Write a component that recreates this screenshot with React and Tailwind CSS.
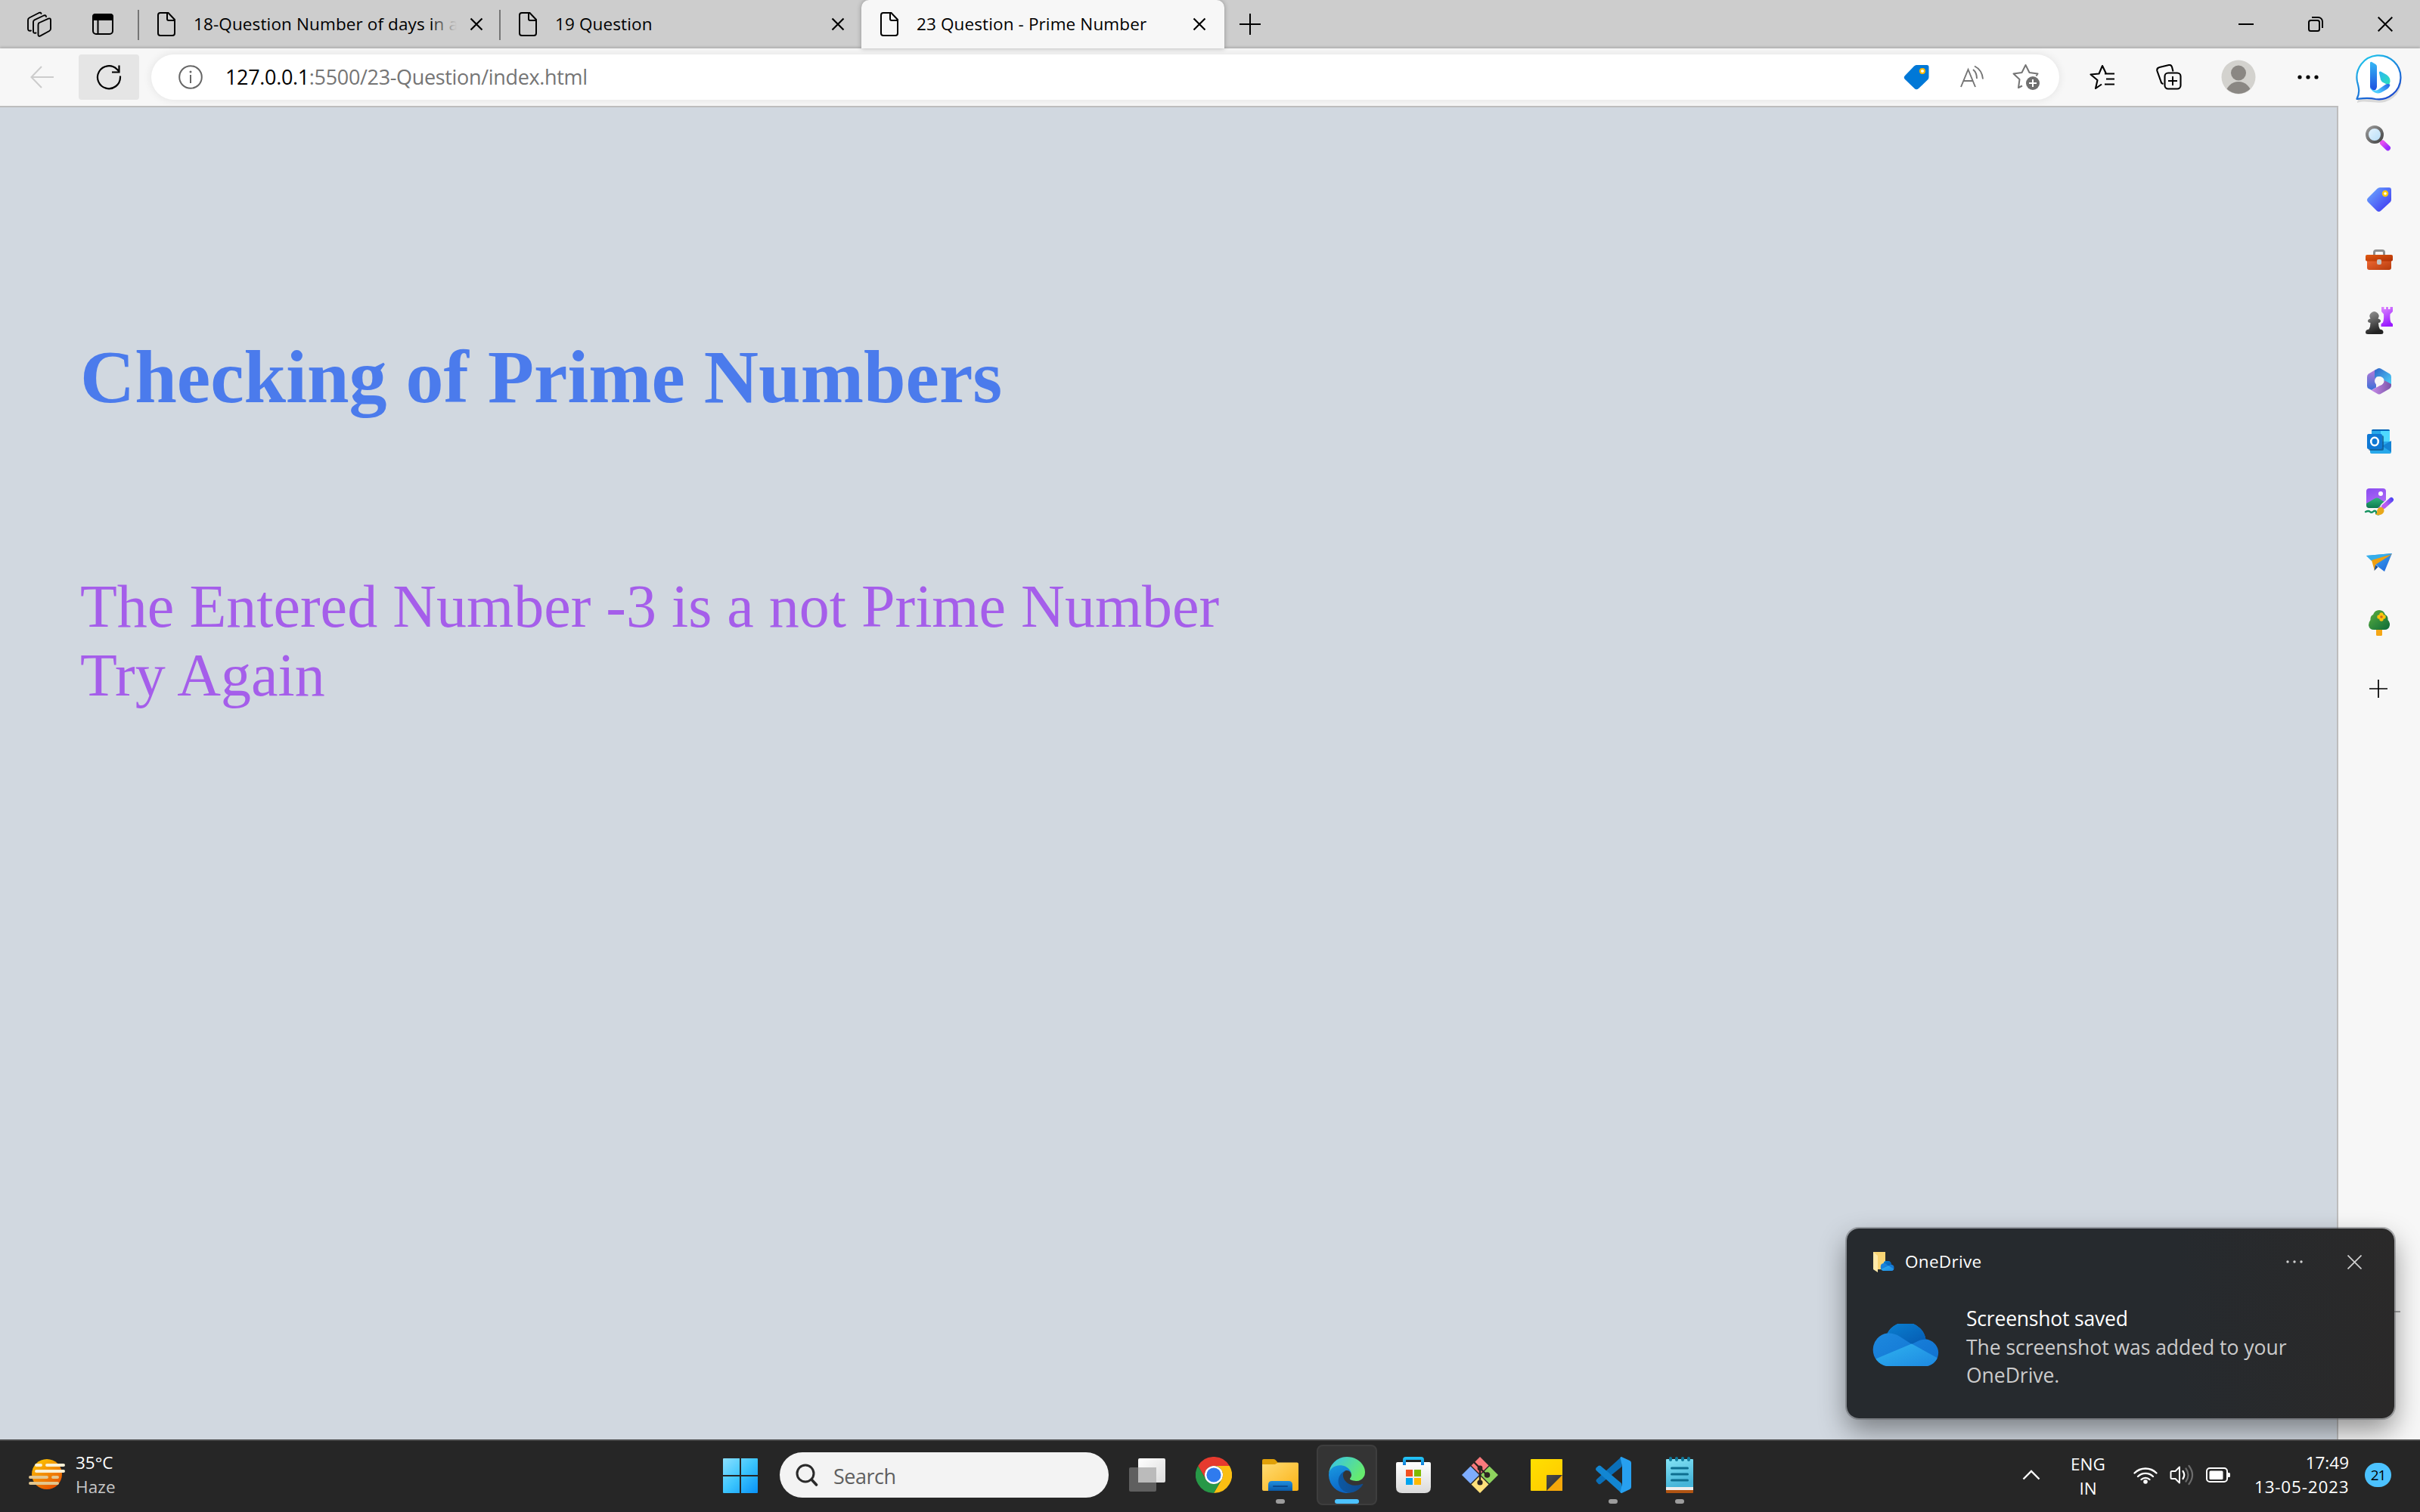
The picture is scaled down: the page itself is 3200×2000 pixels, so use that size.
import React from "react";

function Grad({ id, from, to, x2 = 1, y2 = 1 }) {
  return (
    <linearGradient id={id} x1="0" y1="0" x2={x2} y2={y2}>
      <stop offset="0" stopColor={from} />
      <stop offset="1" stopColor={to} />
    </linearGradient>
  );
}

function Svg({ w, h = w, children, className = "" }) {
  return (
    <svg width={w} height={h} viewBox={`0 0 ${w} ${h}`} fill="none" className={`block shrink-0 ${className}`}>
      {children}
    </svg>
  );
}

const FileIcon = () => (
  <Svg w={24} h={32}>
    <path d="M4 1H14.5L23 10V28a3 3 0 0 1-3 3H4a3 3 0 0 1-3-3V4a3 3 0 0 1 3-3zM13 1.5V9a2 2 0 0 0 2 2h7.5" stroke="#000" strokeWidth="2" />
  </Svg>
);

const CloseTab = () => (
  <Svg w={18}>
    <path d="M1.5 1.5l15 15M16.5 1.5l-15 15" stroke="#000" strokeWidth="2.2" />
  </Svg>
);

function Tab({ title, active, fade, divider }) {
  return (
    <div className={`relative flex h-16 shrink-0 items-center pl-[25px] ${active ? "w-[480px] rounded-t-[10px] bg-[#f7f7f7] shadow-[0_0_6px_rgba(0,0,0,0.3)]" : "w-[478px]"}`}>
      {divider && <div className="absolute -left-px top-[13px] h-10 w-0.5 bg-[#767676]" />}
      <FileIcon />
      <div className="relative ml-6 w-[348px] overflow-hidden whitespace-nowrap text-[22.5px] leading-[30px] tracking-[0.12px] text-black">
        {title}
        {fade && <div className="absolute inset-y-0 right-0 w-8 bg-linear-to-r from-[#cdcdcd]/20 to-[#cdcdcd]" />}
      </div>
      <div className="ml-[17px]">
        <CloseTab />
      </div>
    </div>
  );
}

function TabStrip() {
  return (
    <header className="flex h-16 shrink-0 items-center bg-[#cdcdcd]">
      <Svg w={34} className="ml-[35px]">
        <g stroke="#000" strokeWidth="1.9" strokeLinejoin="round" strokeLinecap="round">
          <path d="M16 15.5L29 9.6q3-1 3 2V23q0 2-1.800 3L18.500 32.300q-3 1.400-3-1.600V18q0-1.800 1-2.500z" />
          <path d="M12.500 28.500q-3.500 1-3.500-2V14q0-1.800 1.600-2.600L23 5.500q2.800-1 3 1.500" />
          <path d="M6 25.500q-4 1-4-2.500V11.500q0-2 1.800-3L16.500 2q2.500-1 3 1" />
        </g>
      </Svg>
      <Svg w={30} className="ml-[52px]">
        <rect x="2" y="2" width="26" height="26" rx="4" stroke="#000" strokeWidth="2" />
        <path d="M1 10V5a4 4 0 0 1 4-4h20a4 4 0 0 1 4 4v5z" fill="#000" />
        <path d="M8.500 9v19" stroke="#000" strokeWidth="2" />
      </Svg>
      <div className="ml-8 flex">
        <Tab title="18-Question Number of days in a" fade divider />
        <Tab title="19 Question" divider />
        <Tab title="23 Question - Prime Number" active />
      </div>
      <Svg w={28} className="ml-5">
        <path d="M14 0v28M0 14h28" stroke="#000" strokeWidth="2" />
      </Svg>
      <div className="ml-auto flex items-center gap-[72px] pr-[36px]">
        <Svg w={20}>
          <path d="M0 10h20" stroke="#000" strokeWidth="2" />
        </Svg>
        <Svg w={20}>
          <rect x="1" y="5" width="14" height="14" rx="2.500" stroke="#000" strokeWidth="2" />
          <path d="M5 1h8.500a5.500 5.500 0 0 1 5.500 5.500V15" stroke="#000" strokeWidth="2" />
        </Svg>
        <Svg w={20}>
          <path d="M.7.7l18.600 18.600M19.300.7L.7 19.300" stroke="#000" strokeWidth="2" />
        </Svg>
      </div>
    </header>
  );
}

const BingIcon = () => (
  <Svg w={66} h={68}>
    <defs>
      <Grad id="bub" from="#1fd0ee" to="#1c4fd0" x2={0.6} />
      <Grad id="b1" from="#35b8f5" to="#2050e0" x2={0} />
      <Grad id="b2" from="#2bb6f2" to="#2de3b8" />
      <Grad id="b3" from="#4fd0ff" to="#1c4fe0" x2={1} y2={-0.4} />
    </defs>
    <path d="M2 60C5 52 6 46 3 38A29 29 0 1 1 27 60.500C18 60 10 58 2 61z" fill="#000" opacity=".12" transform="translate(0 3)" />
    <path d="M1.500 58.800C6 50 4 44 2 36A29 29 0 1 1 26 59C17 57 10 58 1.500 58.800z" fill="#fff" stroke="url(#bub)" strokeWidth="2.200" strokeLinejoin="round" />
    <path d="M19 11.500q0-2.500 2.300-1.500l5 3q1.700 1 1.700 3v27q-1 5-5 4.500-4-1-4-5z" fill="url(#b1)" />
    <path d="M31 24.500q-.5-2.500 2-2l8 4.500q5 3.500 4.500 9l-1.500 5-8-4q-2-1-3-3.500z" fill="url(#b2)" />
    <path d="M19.500 43q2 6 9.500 4l10-7q3-2 6.500 0-1 4-5 6.500l-7 4q-5 2-9-.5-5-3-5-7z" fill="url(#b3)" />
  </Svg>
);

function Toolbar() {
  return (
    <div className="flex h-[76px] shrink-0 items-center bg-[#f7f7f7] shadow-[0_-2px_3px_rgba(0,0,0,0.14)]">
      <Svg w={32} className="ml-10">
        <path d="M31 16H1.500M15 2L1.500 16 15 30" stroke="#ccc" strokeWidth="2" />
      </Svg>
      <div className="ml-8 flex h-[60px] w-20 items-center justify-center rounded bg-[#e5e5e5]">
        <Svg w={34}>
          <path d="M32 15.500v2A15 15 0 1 1 27.500 6.500L31 10M30.500 1.500V10.500H21" stroke="#000" strokeWidth="2.200" />
        </Svg>
      </div>
      <div className="ml-4 flex h-[60px] w-[2523px] items-center rounded-full bg-white pl-9 shadow-[0_0_12px_rgba(0,0,0,0.09)]">
        <Svg w={32}>
          <circle cx="16" cy="16" r="14.800" stroke="#666" strokeWidth="2" />
          <path d="M16 13v11" stroke="#666" strokeWidth="2" />
          <circle cx="16" cy="9" r="1.500" fill="#666" />
        </Svg>
        <div className="ml-[30px] text-[27px] leading-9 tracking-[-0.34px] text-[#757575]">
          <span className="text-black">127.0.0.1</span>:5500/23-Question/index.html
        </div>
        <div className="ml-auto flex items-center pr-[26px]">
          <Svg w={34} className="mr-0.5">
            <path d="M17 1h14q2.500 0 2.500 2.500V17q0 2-1.500 3.500L20 32q-3 2.500-5.500 0L2 20q-2.500-2.500 0-5L14 2.500Q15.500 1 17 1z" fill="#0078d7" />
            <circle cx="25" cy="9" r="3" fill="#fff" stroke="#ffb900" strokeWidth="2" />
          </Svg>
          <Svg w={32} className="ml-[39px]">
            <g stroke="#757575" strokeWidth="1.900">
              <path d="M1 29L10.500 6 20 29M4.500 21h12" />
              <path d="M17 6q5 4 5 12M19 1.500q10 5 11 17" />
            </g>
          </Svg>
          <Svg w={36} className="ml-[37px]">
            <path d="M13 29.500L8 32 9.500 21 1.500 13.500l11-1.500L17.500 2l5 10 11 1.500-2 3" stroke="#757575" strokeWidth="2" strokeLinejoin="round" />
            <circle cx="27" cy="26" r="9" fill="#6f6f6f" />
            <path d="M27 21v10M22 26h10" stroke="#fff" strokeWidth="2" />
          </Svg>
        </div>
      </div>
      <Svg w={34} className="ml-10">
        <path d="M16 26.500L8 32 10.500 21 1.500 13.500l11-1L17 2l5 10.500M20 12.500h13M22 19.500h11M20 26.500h13" stroke="#000" strokeWidth="2.100" strokeLinejoin="round" />
      </Svg>
      <Svg w={34} className="ml-[54px]">
        <path d="M9.500 26q-2.500-.5-3-3L1.500 9q-1-4 3-5L17 1q3-.5 4 2.500l1.500 6" stroke="#000" strokeWidth="2.100" />
        <rect x="11.500" y="11.500" width="21" height="21" rx="4.500" stroke="#000" strokeWidth="2.100" />
        <path d="M22 16v12M16 22h12" stroke="#000" strokeWidth="2" />
      </Svg>
      <Svg w={46} className="ml-[52px]">
        <clipPath id="av"><circle cx="23" cy="23" r="22" /></clipPath>
        <circle cx="23" cy="23" r="22.500" fill="#d3d2ce" />
        <g clipPath="url(#av)" fill="#8a8783">
          <circle cx="23" cy="17.500" r="10" />
          <circle cx="23" cy="46" r="17" />
        </g>
      </Svg>
      <Svg w={28} h={6} className="ml-[55px]">
        <circle cx="3" cy="3" r="2.600" fill="#000" /><circle cx="14" cy="3" r="2.600" fill="#000" /><circle cx="25" cy="3" r="2.600" fill="#000" />
      </Svg>
      <div className="ml-[49px] mt-2">
        <BingIcon />
      </div>
    </div>
  );
}

const sidebarIcons = [
  <Svg w={36} className="-mt-1 -ml-0.5">
    <defs><Grad id="s1" from="#9a9a9a" to="#444" /><Grad id="s2" from="#e9f6ff" to="#b4dcf7" /><Grad id="s3" from="#e54df0" to="#9a2bff" /></defs>
    <path d="M23.500 25l7 6.800" stroke="url(#s3)" strokeWidth="7" strokeLinecap="round" />
    <circle cx="13" cy="14" r="10" fill="url(#s2)" stroke="url(#s1)" strokeWidth="4" />
  </Svg>,
  <Svg w={34}>
    <defs><Grad id="t1" from="#6fb0ff" to="#3b2ff0" /></defs>
    <path d="M18 1h12q3 0 3 3v13q0 2-1.500 3.500L19 32q-2.500 2-5 0L2 20q-2-2.500 0-5L14.500 2.500Q16 1 18 1z" fill="url(#t1)" />
    <circle cx="25" cy="9" r="3" fill="#fff" stroke="#fdc90a" strokeWidth="2.400" />
  </Svg>,
  <Svg w={36} h={28}>
    <defs><Grad id="u1" from="#e05a12" to="#b03005" /><Grad id="u2" from="#f06a35" to="#b53a0c" /></defs>
    <path d="M11.500 8V4q0-2.500 2.500-2.500h8q2.500 0 2.500 2.500V8" stroke="#8e8e8e" strokeWidth="3" />
    <path d="M2 13h32v11q0 3-3 3H5q-3 0-3-3z" fill="url(#u2)" />
    <rect y="7" width="36" height="8.500" rx="2" fill="url(#u1)" />
    <rect x="15" y="13" width="6" height="7" rx="2" fill="#c4c4c4" />
  </Svg>,
  <Svg w={36}>
    <defs><Grad id="c1" from="#999" to="#222" x2={0.3} /><Grad id="c2" from="#e08cff" to="#9a1bff" x2={0.3} /></defs>
    <path d="M21 0h3.500v3H27V0h3v3h2.500V0H36v6l-3.500 3.500q-.5 7 1 11l2.500 2v3.500H20.500v-3.500l2.500-2q1.500-4 1-11L21 6z" fill="url(#c2)" />
    <path d="M6.500 15.500a6 6 0 1 1 10 0q3.500 1 3.500 3t-3 2.500q0 5 2 8.500 4.500.5 4.500 4 0 2.500-3 2.500H3q-3 0-3-2.500 0-3.500 4.500-4Q6.500 26 6.500 21q-3.500-.5-3.500-2.500t3.500-3z" fill="url(#c1)" />
  </Svg>,
  <Svg w={34} h={36}>
    <defs><Grad id="m1" from="#b77bd8" to="#3a6fd8" x2={0} /><Grad id="m2" from="#2f63c8" to="#4fd5fb" /><Grad id="m3" from="#c68be8" to="#7a54a8" x2={1} y2={0} /></defs>
    <path d="M13 2.500L3 8.500q-2 1.500-2 4v12q0 2.500 2 3.500l4 2 6-3.500z" fill="url(#m1)" />
    <path d="M11 4l4-2.500q2-1 4 0L31 8.500q2 1.500 2 4v11l-9.500-6q0-5-6.500-5.500-3 0-6 2z" fill="url(#m2)" />
    <path d="M7 30l12-6.500q5-2.500 4.500-6.500l9.500 5v2q0 2.500-2 4l-12 7q-2 1-4 0L7 30.500z" fill="url(#m3)" />
    <circle cx="17" cy="18" r="6" fill="#f7f7f7" />
  </Svg>,
  <Svg w={32}>
    <path d="M6 2q0-2 2-2h20q2 0 2 2v16H6z" fill="#4fd9ff" />
    <path d="M6 2q0-2 2-2h20q2 0 2 2H6z" fill="#0364b8" />
    <path d="M6 2h12v12H6z" fill="#28a8ea" />
    <path d="M4 16h28v14q0 2-2 2H6q-2 0-2-2z" fill="#28a8ea" />
    <path d="M32 15v15L20 22z" fill="#1483d4" />
    <rect x="2" y="8" width="20" height="20" rx="2" fill="#0b4a80" opacity=".7" />
    <rect y="6" width="20" height="20" rx="2" fill="#0f78d4" />
    <ellipse cx="10" cy="16" rx="4.800" ry="5.200" stroke="#fff" strokeWidth="2.600" />
  </Svg>,
  <Svg w={40} h={36}>
    <defs><Grad id="p1" from="#8a4cf0" to="#b06cf8" x2={0.4} /><Grad id="p2" from="#b85cf0" to="#4b42f5" y2={-0.5} /><Grad id="p3" from="#2fb57a" to="#0f7a50" x2={0} /></defs>
    <rect x="3" y="0" width="26" height="26" rx="4" fill="url(#p1)" />
    <circle cx="22" cy="7" r="3" fill="#fff" />
    <path d="M3 20l12-7q2-1 4 0l8 5-9 8H7q-4 0-4-4z" fill="url(#p3)" />
    <path d="M2 31q4-2 6 0t5-1q3-1 3 2t4 2" stroke="#14925f" strokeWidth="2.400" strokeLinecap="round" />
    <path d="M36 15L26 24" stroke="#f7f7f7" strokeWidth="9" strokeLinecap="round" />
    <path d="M36 15L26 24" stroke="url(#p2)" strokeWidth="6" strokeLinecap="round" />
    <path d="M19 26q4-3 7 1 2 5-3 7.500-4 1.500-8 0 3-2 2-5z" fill="#e8a81a" />
  </Svg>,
  <Svg w={34} h={26}>
    <defs><Grad id="f1" from="#3fb4f5" to="#1f62d8" /></defs>
    <path d="M0 4L34 1 24 25l-8-6z" fill="url(#f1)" />
    <path d="M0 4L34 1 7 11z" fill="#35aeea" />
    <path d="M7 10L34 2 12 16l-1 8z" fill="#f0a010" />
    <path d="M12 16l-1.500 8 5-5z" fill="#1b4c90" />
  </Svg>,
  <Svg w={28} h={34}>
    <defs><Grad id="e1" from="#5cb040" to="#0c6a38" /></defs>
    <rect x="10" y="24" width="8" height="10" rx="1.500" fill="#f5a716" />
    <path d="M14 0q6 0 8 6 4 2 3.500 7 3 3 2.500 7-1 6-7 6H7q-6 0-7-6 0-4 2.500-7Q2 8 6 6q2-6 8-6z" fill="url(#e1)" />
    <g fill="#fdc40c"><circle cx="14" cy="9" r="2.700" /><circle cx="20" cy="9" r="2.700" /><circle cx="17" cy="6" r="2.700" /><circle cx="17" cy="12" r="2.700" /></g>
    <circle cx="17" cy="9" r="1.800" fill="#d2691e" />
  </Svg>,
];

function Sidebar() {
  return (
    <aside className="flex w-[108px] shrink-0 flex-col bg-[#f7f7f7] pt-1">
      {sidebarIcons.map((icon, i) => (
        <div key={i} className="flex h-20 items-center justify-center">{icon}</div>
      ))}
      <div className="flex h-[94px] items-center justify-center">
        <Svg w={24} className="-ml-0.5"><path d="M12 0v24M0 12h24" stroke="#000" strokeWidth="1.700" /></Svg>
      </div>
    </aside>
  );
}

function Cloud({ w, h, id }) {
  return (
    <svg width={w} height={h} viewBox="0 0 88 56" preserveAspectRatio="none" className="block shrink-0">
      <defs><Grad id={id + "a"} from="#0a7fd0" to="#0559b0" /><Grad id={id + "b"} from="#1f8de0" to="#0f6fd0" /><Grad id={id + "c"} from="#30b5f0" to="#1c85e0" /><clipPath id={id + "k"}><path d="M20 56A21 22 0 0 1 21 12.500A26 26 0 0 1 70 20.500A18 18 0 0 1 72 56z" /></clipPath></defs>
      <g clipPath={`url(#${id}k)`}>
        <path d="M0 0h88v56H0z" fill={`url(#${id}b)`} />
        <path d="M21 0h52v21q-8-1-13 2l-8 4-15-10q-7-5-16-4.500z" fill={`url(#${id}a)`} />
        <path d="M0 49L52 26.500 88 47v12H0z" fill={`url(#${id}c)`} />
      </g>
    </svg>
  );
}

function Toast() {
  return (
    <div className="absolute left-[2442px] top-[1625px] h-[251px] w-[724px] rounded-2xl bg-linear-to-r from-[#262a2e] from-60% to-[#2a2929] shadow-[0_0_0_2px_rgba(90,94,98,0.45),0_16px_36px_rgba(0,0,0,0.42)]">
      <div className="flex h-[88px] items-center pl-[35px] pr-[43px]">
        <div className="relative">
          <Svg w={27} h={28}>
            <path d="M0 1h16v23H0z" fill="#f9d574" /><path d="M0 1l6 5v22l-6-4z" fill="#ffe9a8" />
          </Svg>
          <div className="absolute -right-px bottom-0.5"><Cloud w={19} h={13} id="k1" /></div>
        </div>
        <div className="ml-[15px] text-[22.500px] leading-8 tracking-[0.3px] text-white">OneDrive</div>
        <Svg w={22} h={4} className="ml-auto">
          <circle cx="2" cy="2" r="1.700" fill="#d0d0d0" /><circle cx="11" cy="2" r="1.700" fill="#d0d0d0" /><circle cx="20" cy="2" r="1.700" fill="#d0d0d0" />
        </Svg>
        <Svg w={19} className="ml-[59px]">
          <path d="M.5.5l18 18M18.500.5l-18 18" stroke="#d0d0d0" strokeWidth="1.700" />
        </Svg>
      </div>
      <div className="flex pl-8">
        <div className="pt-[38px]"><Cloud w={91} h={56} id="k2" /></div>
        <div className="ml-[35px] pt-[13px] text-[26.500px] leading-[37px] text-[#cbcbcb]">
          <div className="h-[38px] tracking-[-0.2px] text-white">Screenshot saved</div>
          <div className="tracking-[-0.03px]">The screenshot was added to your</div>
          <div className="tracking-[-0.03px]">OneDrive.</div>
        </div>
      </div>
    </div>
  );
}

const taskIcons = [
  { icon: (
    <Svg w={48} h={44}>
      <defs><Grad id="w1" from="#fff" to="#dcdcdc" /></defs>
      <rect x="12" y="0" width="36" height="32" rx="2" fill="url(#w1)" />
      <rect x="0" y="12" width="36" height="32" rx="2" fill="#777" opacity=".7" />
      <rect x="12" y="12" width="24" height="20" fill="#bbb" />
    </Svg>) },
  { icon: (
    <Svg w={48}>
      <path d="M24 12H44.800A24 24 0 0 0 3.200 12L13.600 30A12 12 0 0 1 24 12z" fill="#e63a2e" />
      <path d="M34.400 30L24 48A24 24 0 0 0 44.800 12H24A12 12 0 0 1 34.400 30z" fill="#fbbf12" />
      <path d="M13.600 30L3.200 12A24 24 0 0 0 24 48L34.400 30A12 12 0 0 1 13.600 30z" fill="#279847" />
      <circle cx="24" cy="24" r="12" fill="#fff" /><circle cx="24" cy="24" r="9.600" fill="#2f7bee" />
    </Svg>) },
  { run: true, icon: (
    <Svg w={48} h={42}>
      <defs><Grad id="x1" from="#ffdc73" to="#fbb216" /><Grad id="x2" from="#1f8fe0" to="#0a5aa8" x2={0} /></defs>
      <path d="M0 2q0-2 2-2h13q2 0 3 1.500L21 5v8H0z" fill="#e0a008" />
      <path d="M0 7h17l4-2.500h25q2 0 2 2V40q0 2-2 2H2q-2 0-2-2z" fill="url(#x1)" />
      <path d="M8 42V34q0-5 5-5h22q5 0 5 5v8z" fill="url(#x2)" />
      <path d="M15 36h18" stroke="#0b4b90" strokeWidth="2" strokeLinecap="round" />
    </Svg>) },
  { active: true, icon: (
    <svg width="48" height="48" viewBox="0 0 256 256">
      <defs><Grad id="g1" from="#0c59a4" to="#114a8b" x2={1} y2={0} /><Grad id="g2" from="#1b9de2" to="#0a66c8" x2={0.3} /><Grad id="g3" from="#35c1f1" to="#66eb6e" x2={1} y2={0.5} /></defs>
      <path d="M235.700 190.600a94 94 0 0 1-10.500 4.700 102 102 0 0 1-36 6.500c-47.300 0-88.500-32.600-88.500-74.400a31.500 31.500 0 0 1 16.400-27.300c-42.800 1.800-53.800 46.400-53.800 72.500 0 74 68 81.400 82.800 81.400 7.900 0 19.800-2.300 27-4.500l1.300-.5a128.300 128.300 0 0 0 66.600-52.800 4 4 0 0 0-5.300-5.600z" fill="url(#g1)" />
      <path d="M105.700 241.400A79.200 79.200 0 0 1 83 220a80.700 80.700 0 0 1 29.500-120c3.100-1.400 8.500-4 15.500-4a32.400 32.400 0 0 1 25.700 13 31.900 31.900 0 0 1 6.400 18.700c0-.2 24.500-79.600-80-79.600C36.200 48.100 0 89.800 0 126.300a130 130 0 0 0 12.100 56 128 128 0 0 0 156.400 67.200 75.600 75.600 0 0 1-62.800-8z" fill="url(#g2)" />
      <path d="M152.200 148.900c-.8 1-3.300 2.500-3.300 5.600 0 2.600 1.700 5.200 4.800 7.300 14.300 10 41.400 8.600 41.500 8.600a59.600 59.600 0 0 0 30.300-8.300A61.400 61.400 0 0 0 256 109.200c.3-22.400-8-37.300-11.300-43.900C223.500 23.900 177.700 0 128 0A128 128 0 0 0 0 126.200c.5-36.500 36.800-66 80-66 3.500 0 23.500.3 42 10 16.300 8.600 24.900 19 30.900 29.200 6.100 10.700 7.200 24.200 7.200 29.500 0 5.400-2.700 13.400-7.900 20z" fill="url(#g3)" />
    </svg>) },
  { icon: (
    <Svg w={46} h={48}>
      <defs><Grad id="y1" from="#fff" to="#dadada" x2={0} /><Grad id="y2" from="#22c2f5" to="#1079d8" x2={0} /></defs>
      <path d="M0 9q0-2 2-2h42q2 0 2 2v31q0 8-8 8H8q-8 0-8-8z" fill="url(#y1)" />
      <path d="M11 11V4q0-2 2-2h20q2 0 2 2v7" stroke="url(#y2)" strokeWidth="4" />
      <path d="M13 17h9v9h-9z" fill="#f25022" /><path d="M24 17h9v9h-9z" fill="#7fba00" /><path d="M13 28h9v9h-9z" fill="#00a4ef" /><path d="M24 28h9v9h-9z" fill="#ffb900" />
    </Svg>) },
  { icon: (
    <Svg w={48}>
      <path d="M24 0L35.500 11.500 24 23 12.500 11.500z" fill="#fa7a7c" />
      <path d="M36.500 12.500L48 24 36.500 35.500 25 24z" fill="#8ed45e" />
      <path d="M24 25L35.500 36.500 24 48 12.500 36.500z" fill="#ffe07a" />
      <path d="M11.500 12.500L23 24 11.500 35.500 0 24z" fill="#7eadff" />
      <path d="M15 6l9 9v19M24 15l9 9" stroke="#2c2421" strokeWidth="2.400" />
      <circle cx="24" cy="15" r="3.400" fill="#2c2421" /><circle cx="33.500" cy="24" r="3.800" fill="#2c2421" /><circle cx="24" cy="34" r="3.600" fill="#2c2421" />
    </Svg>) },
  { icon: (
    <Svg w={42}>
      <defs><Grad id="z1" from="#ffe000" to="#ffc800" /><Grad id="z2" from="#4a4a4a" to="#2c2c2c" /></defs>
      <path d="M1 0h40q1 0 1 1v40q0 1-1 1H1q-1 0-1-1V1q0-1 1-1z" fill="url(#z1)" />
      <path d="M42 21L21 42h20q1 0 1-1z" fill="#f5a80a" />
      <path d="M22 21h20L21 42V22q0-1 1-1z" fill="url(#z2)" />
    </Svg>) },
  { run: true, icon: (
    <Svg w={48}>
      <path d="M35 0L2.500 29.500q-2 2 0 4l2 2.300q1.500 1 3 0L35.500 13z" fill="#0a6fb8" />
      <path d="M7.500 12q-1.500-1-3 0l-2.800 2.500q-1.500 1.800 0 3.500L35 48V35z" fill="#1286d2" />
      <path d="M35 0q-1 0-1.500 1L36 13v22l-2.500 12q.5 1 2 1L46 43q2-1 2-3V8q0-2-2-3z" fill="#27a0f0" />
    </Svg>) },
  { run: true, icon: (
    <Svg w={36} h={48}>
      <defs><Grad id="n1" from="#84e3f5" to="#45b4d8" x2={0.3} /></defs>
      <path d="M0 40h36v7q0 1-1 1H1q-1 0-1-1z" fill="#b05412" /><path d="M0 38h36v6H0z" fill="#eee" />
      <path d="M0 4q0-1 1-1h34q1 0 1 1v36H0z" fill="url(#n1)" />
      <path d="M7.500 15h21M7.500 23h21M7.500 31h21" stroke="#0d6e90" strokeWidth="3" strokeLinecap="round" />
      <path d="M6 2v2M14 2v2M22 2v2M30 2v2" stroke="#107a9c" strokeWidth="4" strokeLinecap="round" />
    </Svg>) },
];

function Taskbar() {
  return (
    <footer className="relative flex h-24 shrink-0 items-center border-t-2 border-[#494949] bg-[#262626] text-[22.500px] leading-8 text-white">
      <div className="flex w-[956px] items-center pl-[38px]">
        <Svg w={48} h={40} className="-mt-1.5">
          <defs><Grad id="h1" from="#ffd000" to="#e85500" x2={0.6} /></defs>
          <circle cx="24" cy="20" r="20" fill="url(#h1)" />
          <path d="M10 8h6M24 8h22M10 16h36" stroke="#faf0d5" strokeWidth="4" strokeLinecap="round" />
          <path d="M2 24h22M32 24h6M2 32h36" stroke="#e3c68e" strokeWidth="4" strokeLinecap="round" />
        </Svg>
        <div className="-mt-1 ml-[14px]">
          <div>35°C</div>
          <div className="tracking-[0.1px] text-[#c8c8c8]">Haze</div>
        </div>
      </div>
      <Svg w={46} className="-mt-0.5">
        <defs><linearGradient id="win" x1="0" y1="0" x2="46" y2="46" gradientUnits="userSpaceOnUse"><stop stopColor="#8be0ff" /><stop offset=".5" stopColor="#3cc5fd" /><stop offset="1" stopColor="#0892f8" /></linearGradient></defs>
        <path d="M1 0h21v22H0V1q0-1 1-1zM24 0h21q1 0 1 1v21H24zM0 24h22v22H1q-1 0-1-1zM24 24h22v21q0 1-1 1H24z" fill="url(#win)" />
      </Svg>
      <div className="-mt-1 ml-[29px] flex h-[60px] w-[435px] items-center rounded-full bg-[#f3f3f3] pl-[21px]">
        <Svg w={30}>
          <circle cx="13" cy="13" r="11" stroke="#2a2a2a" strokeWidth="3" /><path d="M21 21l6.500 7" stroke="#2a2a2a" strokeWidth="3.600" strokeLinecap="round" />
        </Svg>
        <div className="mt-1 ml-5 text-[27px] leading-9 tracking-[-0.5px] text-[#5f5f5f]">Search</div>
      </div>
      <div className="-mt-1 ml-[7px] flex">
        {taskIcons.map(({ icon, run, active }, i) => (
          <div key={i} className="flex w-[88px] justify-center">
            <div className={`relative flex size-20 items-center justify-center rounded-lg ${active ? "border-2 border-[#3e3e3e] bg-[#343434]" : ""}`}>
              {icon}
              {run && <div className="absolute bottom-0.5 h-1.5 w-3 rounded-full bg-[#9c9c9c]" />}
              {active && <div className="absolute bottom-0 h-1.5 w-8 rounded-full bg-[#4cc2ff]" />}
            </div>
          </div>
        ))}
      </div>
      <div className="-mt-1 ml-auto flex items-center pr-[38px]">
        <Svg w={24} h={14}><path d="M1.500 12.500L12 2l10.500 10.500" stroke="#fff" strokeWidth="2.400" /></Svg>
        <div className="mt-1 ml-[39px] w-12 text-center">
          <div>ENG</div>
          <div>IN</div>
        </div>
        <Svg w={32} h={24} className="ml-9">
          <g stroke="#fff" strokeWidth="2.300" strokeLinecap="round"><path d="M1.500 9.500a20.500 20.500 0 0 1 29 0M6 14a14.200 14.200 0 0 1 20 0M10.500 18a8 8 0 0 1 11 0" /></g>
          <circle cx="16" cy="21" r="2.800" fill="#fff" />
        </Svg>
        <Svg w={33} h={28} className="ml-4">
          <path d="M1.500 10.500q0-1.500 1.500-1.500h4.500L13 3.500V24.500L7.500 19H3q-1.500 0-1.500-1.500z" stroke="#fff" strokeWidth="2" strokeLinejoin="round" />
          <path d="M17.500 9q3.500 5 0 10" stroke="#fff" strokeWidth="2.200" strokeLinecap="round" />
          <path d="M21.500 5.500q6 8.500 0 17M25.500 2q9 12 0 24" stroke="#6c6c6c" strokeWidth="2.200" strokeLinecap="round" />
        </Svg>
        <Svg w={32} h={20} className="ml-[15px]">
          <rect x="1" y="1" width="27" height="18" rx="4" stroke="#fff" strokeWidth="2" /><rect x="4.500" y="4.500" width="18" height="11.500" rx="1.500" fill="#fff" /><path d="M29 7h1.500q1.500 0 1.500 1.500v3q0 1.500-1.500 1.500H29z" fill="#fff" />
        </Svg>
        <div className="ml-[32px] w-[125px] text-right whitespace-nowrap">
          <div>17:49</div>
          <div className="tracking-[0.8px]">13-05-2023</div>
        </div>
        <div className="ml-[21px] flex h-8 w-[35px] items-center justify-center rounded-full bg-[#4cc2ff] text-[19px] tracking-[-1px] text-black">21</div>
      </div>
    </footer>
  );
}

export default function App() {
  return (
    <div className="relative flex h-[2000px] w-[3200px] flex-col overflow-hidden bg-[#f7f7f7] font-['Open_Sans',sans-serif]">
      <TabStrip />
      <Toolbar />
      <div className="flex min-h-0 flex-1">
        <main className="flex-1 border-t-2 border-r-2 border-[#bdbdbd] bg-[#d1d8e0] pt-[302px] pl-[106px] font-['Liberation_Serif',serif]">
          <h1 className="text-[100px] leading-[110px] font-bold text-[#4b7bec]">Checking of Prime Numbers</h1>
          <p className="mt-[203px] text-[80px] leading-[91px] text-[#a55eea]">
            The Entered Number -3 is a not Prime Number
            <br />
            Try Again
          </p>
        </main>
        <Sidebar />
      </div>
      <div className="absolute left-[3166px] top-[1734px] h-0.5 w-2 bg-[#a8a8a8]" />
      <Toast />
      <Taskbar />
    </div>
  );
}
